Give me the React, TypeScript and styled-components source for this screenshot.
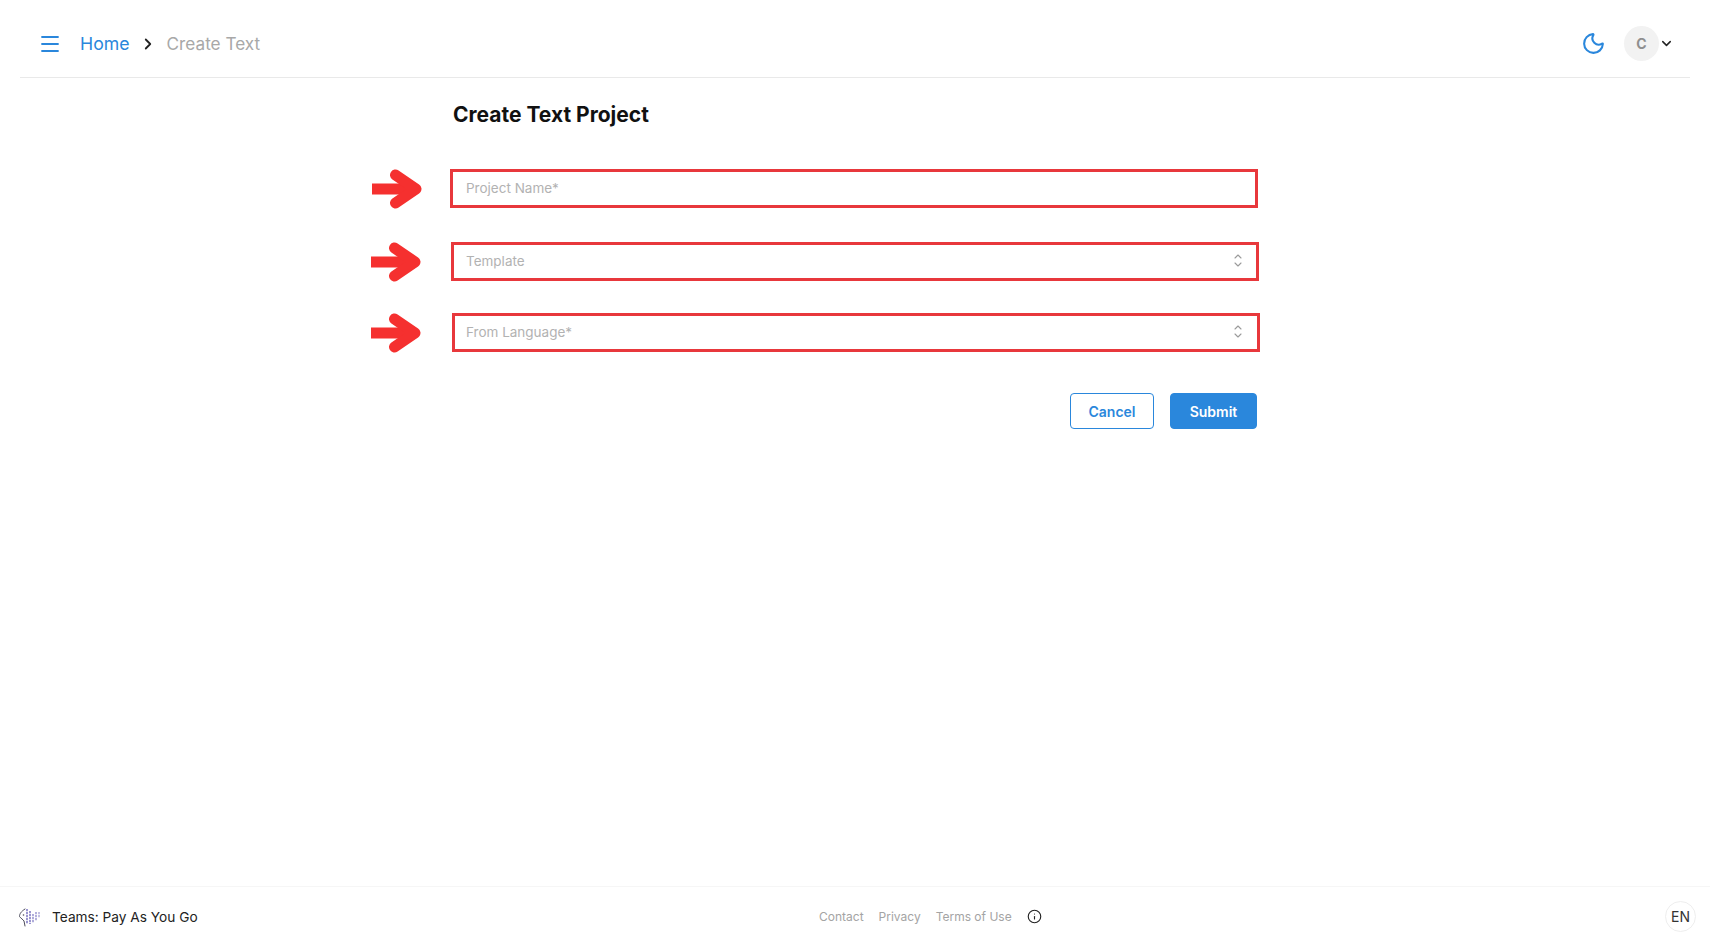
import React from 'react'

// styles
import styled, { createGlobalStyle } from 'styled-components'

// components
import { ChevronDown, ChevronRight, Info, Menu, Moon } from 'lucide-react'

const BLUE = '#2a87dc'
const RED = '#e8383c'

const GlobalStyle = createGlobalStyle`
  html, body {
    margin: 0;
    padding: 0;
    background: #fff;
  }
  body {
    font-family: Inter, "Liberation Sans", sans-serif;
    color: #111;
  }
`

const ArrowIcon = () => (
  <svg width="50" height="40" viewBox="0 0 50 40">
    <path d="M0 14.5 H38 V25.5 H0 Z" fill="#f5302f" />
    <path d="M23.5 6 L44 20 L23.5 34" fill="none" stroke="#f5302f" strokeWidth="11" strokeLinecap="round" strokeLinejoin="round" />
  </svg>
)

const SelectIcon = () => (
  <SelectSvg width="8" height="13" viewBox="0 0 8 13" fill="none" stroke="#9a9a9a" strokeWidth="1.1" strokeLinecap="round" strokeLinejoin="round">
    <path d="M1 4 L4 1 L7 4" />
    <path d="M1 9 L4 12 L7 9" />
  </SelectSvg>
)

const TeamLogo = () => (
  <svg width="24" height="22" viewBox="0 0 24 22" fill="none">
    <path d="M7 3 C3 5.5 1.5 8 1.5 10.5 C3 12.5 5 13.5 6 15 L7 20" stroke="#4d4d5c" strokeWidth="1" strokeLinecap="round" />
    <circle cx="5.5" cy="9" r="0.8" fill="#4d4d5c" />
    <g stroke="#8a84c8" strokeWidth="1.7" strokeDasharray="2.2 0.8">
      <path d="M9 3 V18" />
      <path d="M12 5 V18" />
      <path d="M15 8 V17" opacity="0.8" />
      <path d="M18 6 V15" opacity="0.75" />
      <path d="M21 6 V12" opacity="0.6" />
    </g>
  </svg>
)

const fields = [
  { label: 'Project Name*', select: false, shift: -1 },
  { label: 'Template', select: true, shift: 0 },
  { label: 'From Language*', select: true, shift: 1 },
]

const App = () => {
  return (
    <Page>
      <GlobalStyle />
      <Header>
        <NavLeft>
          <MenuButton>
            <Menu size={24} strokeWidth={1.8} />
          </MenuButton>
          <HomeLink>Home</HomeLink>
          <Crumb>
            <ChevronRight size={18} strokeWidth={2.4} />
          </Crumb>
          <CurrentCrumb>Create Text</CurrentCrumb>
        </NavLeft>
        <NavRight>
          <ThemeToggle>
            <Moon size={25} strokeWidth={2} />
          </ThemeToggle>
          <Avatar>C</Avatar>
          <ChevronDown size={15} strokeWidth={2.4} color="#222" />
        </NavRight>
      </Header>

      <Main>
        <Title>Create Text Project</Title>
        <Form>
          {fields.map((field) => (
            <Row key={field.label} $shift={field.shift}>
              <ArrowBox $shift={field.shift}>
                <ArrowIcon />
              </ArrowBox>
              <Field $shift={field.shift}>
                <Placeholder>{field.label}</Placeholder>
                {field.select && <SelectIcon />}
              </Field>
            </Row>
          ))}
        </Form>
        <Actions>
          <CancelButton>Cancel</CancelButton>
          <SubmitButton>Submit</SubmitButton>
        </Actions>
      </Main>

      <Footer>
        <FooterLeft>
          <TeamLogo />
          <span>Teams: Pay As You Go</span>
        </FooterLeft>
        <FooterLinks>
          <FooterLink>Contact</FooterLink>
          <FooterLink>Privacy</FooterLink>
          <FooterLink>Terms of Use</FooterLink>
          <InfoBox>
            <Info size={15} strokeWidth={1.8} color="#222" />
          </InfoBox>
        </FooterLinks>
        <LangBadge>EN</LangBadge>
      </Footer>
    </Page>
  )
}

export default App

const Page = styled.div`
  width: 1710px;
  height: 945px;
  display: flex;
  flex-direction: column;
  overflow: hidden;
  background: #fff;
`

const Header = styled.header`
  height: 78px;
  margin: 0 20px;
  padding: 12px 16px 2px 18px;
  box-sizing: border-box;
  border-bottom: 1.5px solid #e9e9e9;
  display: flex;
  align-items: center;
  justify-content: space-between;
`

const NavLeft = styled.nav`
  display: flex;
  align-items: center;
`

const MenuButton = styled.div`
  width: 24px;
  height: 24px;
  color: ${BLUE};
  margin-right: 18px;
  svg {
    display: block;
  }
`

const HomeLink = styled.a`
  font-size: 17.7px;
  color: ${BLUE};
`

const Crumb = styled.span`
  display: flex;
  margin: 0 10px 0 9px;
  color: #222;
`

const CurrentCrumb = styled.span`
  font-size: 17.2px;
  color: #a8a8a8;
`

const NavRight = styled.div`
  display: flex;
  align-items: center;
`

const ThemeToggle = styled.div`
  display: flex;
  color: ${BLUE};
  margin-right: 18px;
`

const Avatar = styled.div`
  width: 35px;
  height: 35px;
  border-radius: 50%;
  background: #f2f2f2;
  color: #8f8f8f;
  font-size: 14px;
  font-weight: 700;
  display: flex;
  align-items: center;
  justify-content: center;
`

const Main = styled.main`
  flex: 1;
  padding: 24px 0 0 372px;
  display: flex;
  flex-direction: column;
`

const Title = styled.h1`
  margin: 0 0 41px 81px;
  font-size: 21px;
  line-height: 26px;
  font-weight: 700;
  color: #111;
`

const Form = styled.div`
  display: flex;
  flex-direction: column;
  gap: 33px;
`

const Row = styled.div<{ $shift: number }>`
  display: flex;
  align-items: center;
  height: 39px;
  margin: ${(p) => (p.$shift === 0 ? '1px 0 -1px -1px' : '0 0 0 -1px')};
`

const ArrowBox = styled.div<{ $shift: number }>`
  display: flex;
  margin-left: ${(p) => (p.$shift < 0 ? 1 : 0)}px;
  margin-right: ${(p) => (p.$shift < 0 ? 28 : 30 + p.$shift)}px;
`

const Field = styled.div<{ $shift: number }>`
  width: 808px;
  height: 39px;
  box-sizing: border-box;
  border: 3px solid ${RED};
  padding: 0 ${(p) => 14 + p.$shift}px 0 ${(p) => 12 - p.$shift}px;
  display: flex;
  align-items: center;
  justify-content: space-between;
  background: #fff;
`

const Placeholder = styled.span`
  font-size: 13.5px;
  color: #b2b2b2;
  margin-bottom: 2px;
`

const SelectSvg = styled.svg`
  margin-bottom: 2px;
`

const Actions = styled.div`
  width: 885px;
  margin-top: 41px;
  display: flex;
  justify-content: flex-end;
  gap: 16px;
`

const BaseButton = styled.button`
  height: 36px;
  box-sizing: border-box;
  border-radius: 4px;
  font-family: inherit;
  font-size: 14px;
  font-weight: 600;
  padding: 0;
  cursor: pointer;
`

const CancelButton = styled(BaseButton)`
  width: 84px;
  background: #fff;
  border: 1px solid ${BLUE};
  color: ${BLUE};
`

const SubmitButton = styled(BaseButton)`
  width: 87px;
  background: ${BLUE};
  border: 1px solid ${BLUE};
  color: #fff;
`

const Footer = styled.footer`
  height: 59px;
  box-sizing: border-box;
  border-top: 1px solid #f6f6f6;
  padding: 0 14px 0 18px;
  display: grid;
  grid-template-columns: 801px auto 1fr;
  align-items: center;
`

const FooterLeft = styled.div`
  display: flex;
  align-items: center;
  gap: 10px;
  font-size: 13.7px;
  color: #222;
  padding-top: 1px;
`

const FooterLinks = styled.div`
  display: flex;
  align-items: center;
  gap: 15px;
`

const FooterLink = styled.a`
  font-size: 12px;
  color: #a4a4a4;
`

const InfoBox = styled.span`
  display: flex;
`

const LangBadge = styled.div`
  justify-self: end;
  width: 31px;
  height: 31px;
  box-sizing: border-box;
  border-radius: 50%;
  border: 1px solid #eee;
  font-size: 14px;
  color: #333;
  display: flex;
  align-items: center;
  justify-content: center;
`
